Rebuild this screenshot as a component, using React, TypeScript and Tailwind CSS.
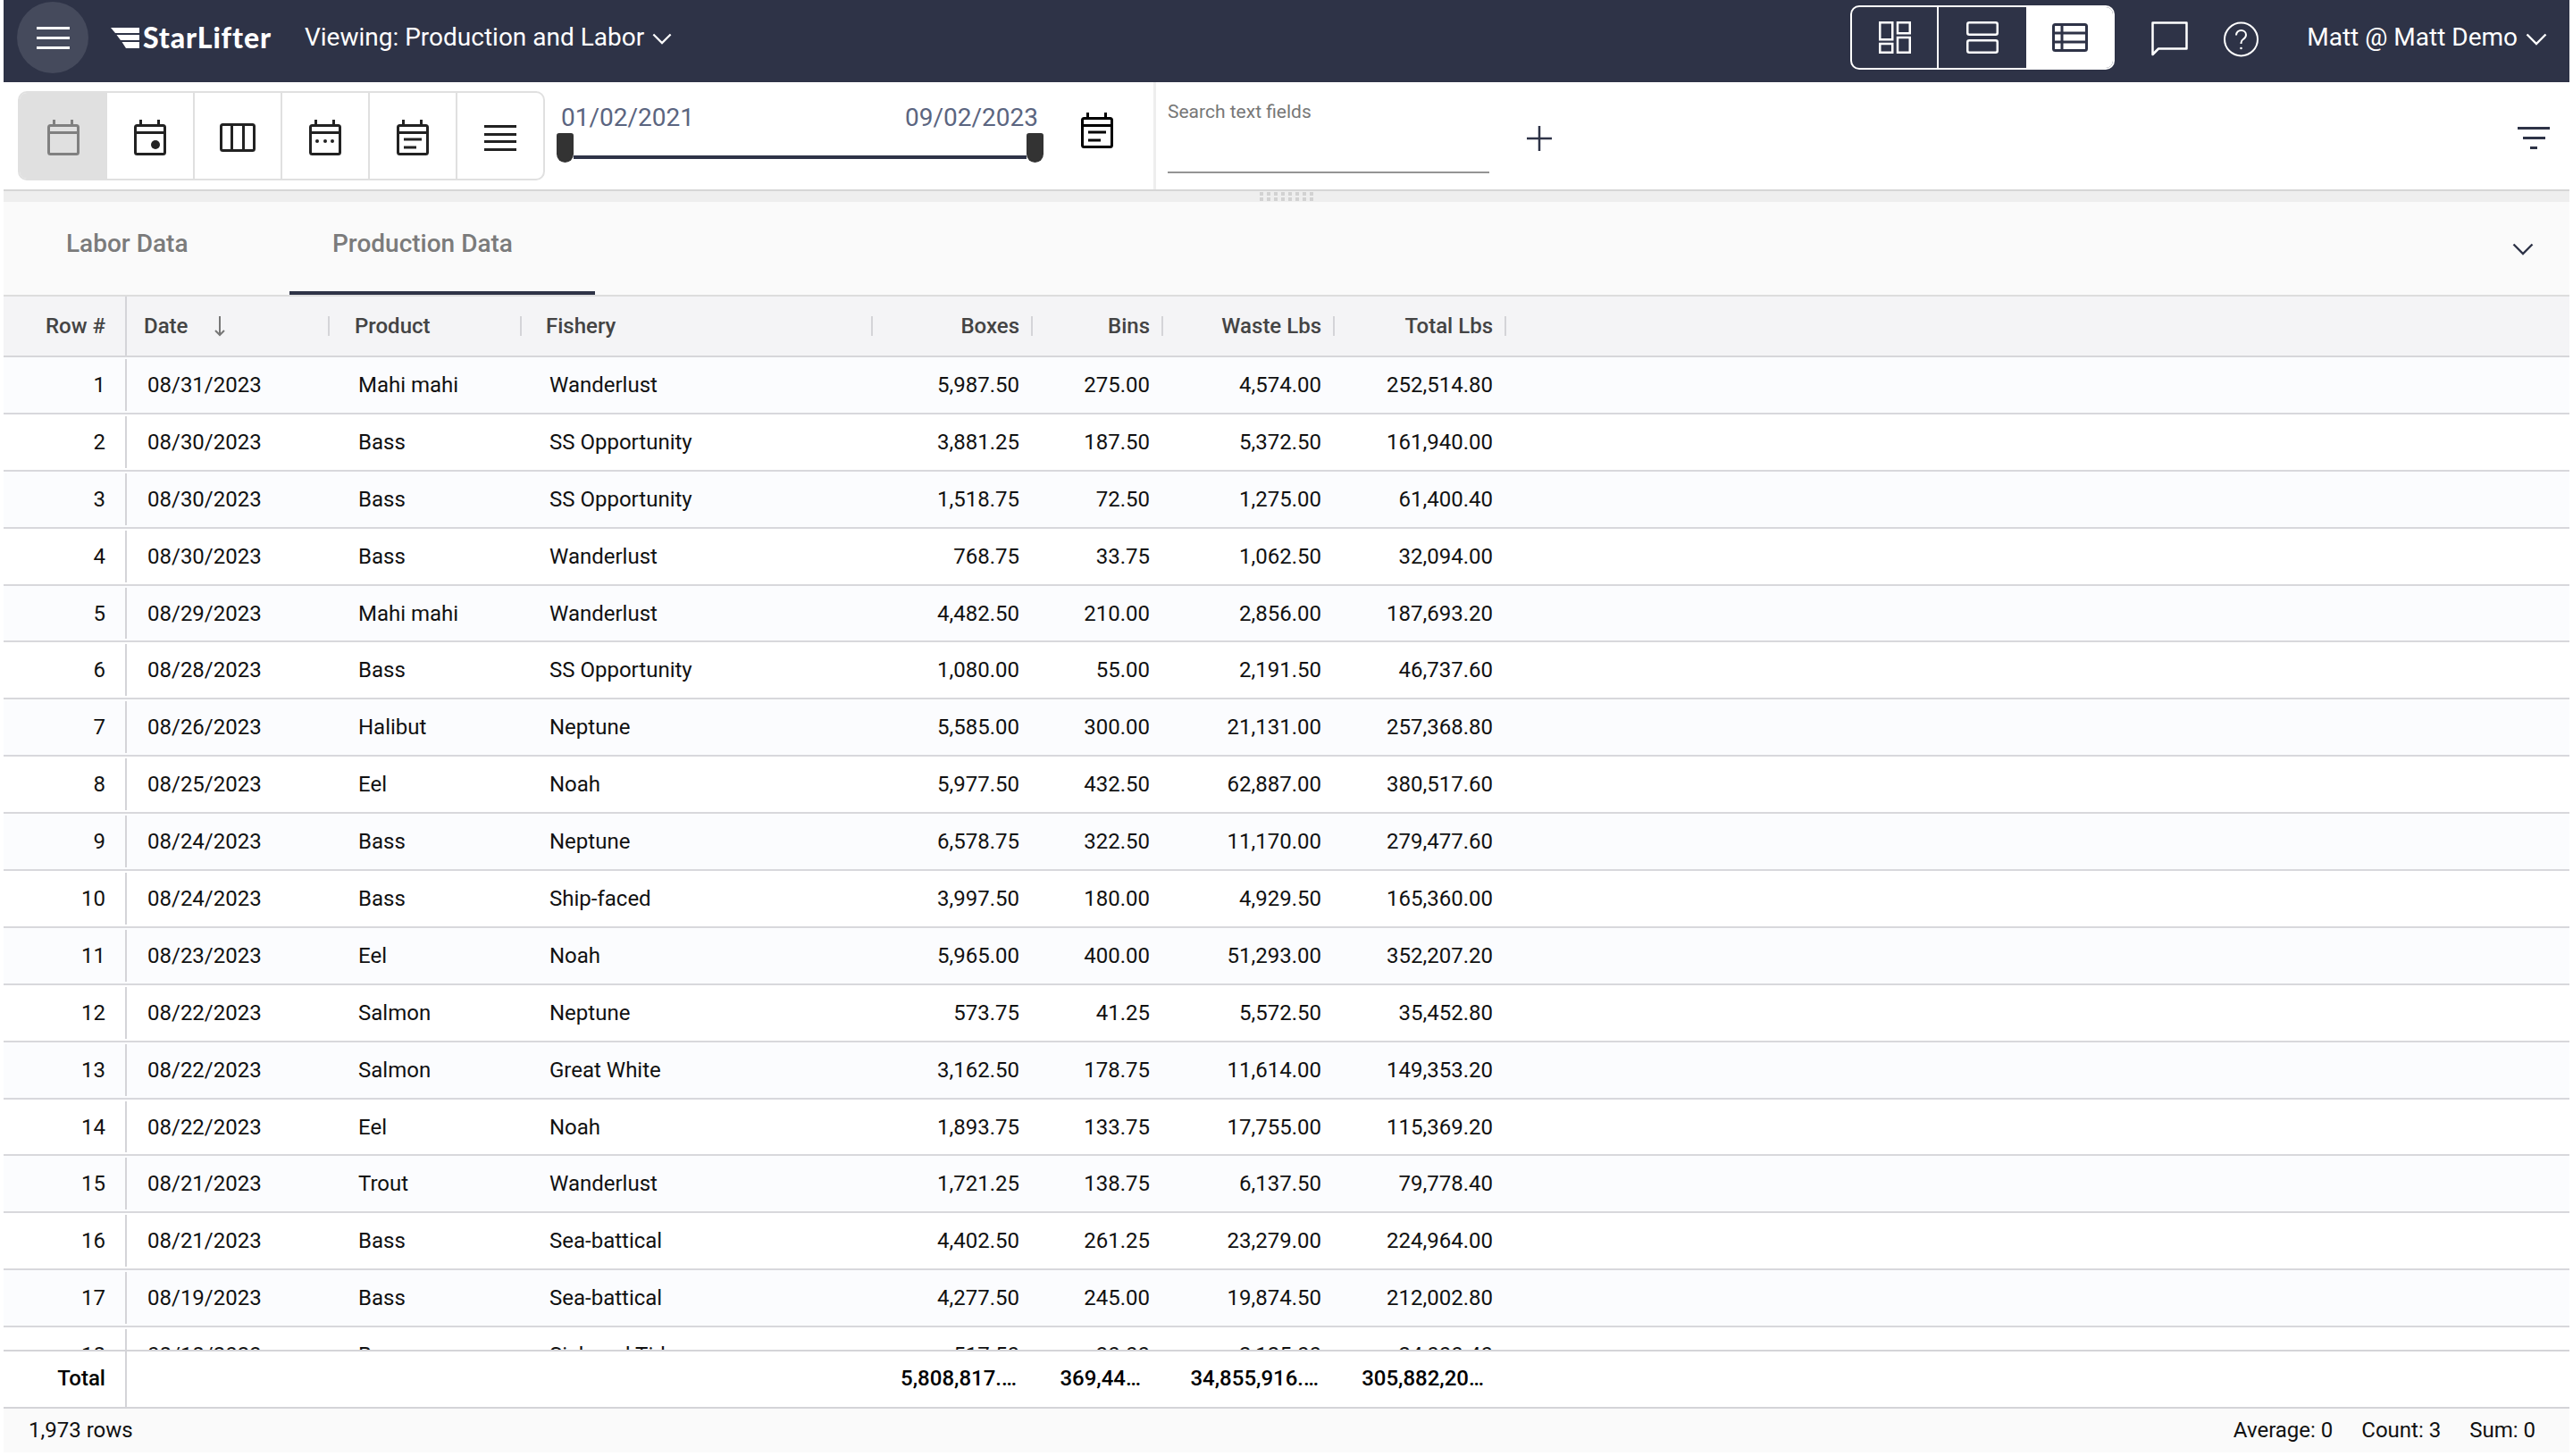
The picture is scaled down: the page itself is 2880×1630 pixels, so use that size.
const sans = "font-['Roboto',sans-serif]";

const rows = [
  ["1", "08/31/2023", "Mahi mahi", "Wanderlust", "5,987.50", "275.00", "4,574.00", "252,514.80"],
  ["2", "08/30/2023", "Bass", "SS Opportunity", "3,881.25", "187.50", "5,372.50", "161,940.00"],
  ["3", "08/30/2023", "Bass", "SS Opportunity", "1,518.75", "72.50", "1,275.00", "61,400.40"],
  ["4", "08/30/2023", "Bass", "Wanderlust", "768.75", "33.75", "1,062.50", "32,094.00"],
  ["5", "08/29/2023", "Mahi mahi", "Wanderlust", "4,482.50", "210.00", "2,856.00", "187,693.20"],
  ["6", "08/28/2023", "Bass", "SS Opportunity", "1,080.00", "55.00", "2,191.50", "46,737.60"],
  ["7", "08/26/2023", "Halibut", "Neptune", "5,585.00", "300.00", "21,131.00", "257,368.80"],
  ["8", "08/25/2023", "Eel", "Noah", "5,977.50", "432.50", "62,887.00", "380,517.60"],
  ["9", "08/24/2023", "Bass", "Neptune", "6,578.75", "322.50", "11,170.00", "279,477.60"],
  ["10", "08/24/2023", "Bass", "Ship-faced", "3,997.50", "180.00", "4,929.50", "165,360.00"],
  ["11", "08/23/2023", "Eel", "Noah", "5,965.00", "400.00", "51,293.00", "352,207.20"],
  ["12", "08/22/2023", "Salmon", "Neptune", "573.75", "41.25", "5,572.50", "35,452.80"],
  ["13", "08/22/2023", "Salmon", "Great White", "3,162.50", "178.75", "11,614.00", "149,353.20"],
  ["14", "08/22/2023", "Eel", "Noah", "1,893.75", "133.75", "17,755.00", "115,369.20"],
  ["15", "08/21/2023", "Trout", "Wanderlust", "1,721.25", "138.75", "6,137.50", "79,778.40"],
  ["16", "08/21/2023", "Bass", "Sea-battical", "4,402.50", "261.25", "23,279.00", "224,964.00"],
  ["17", "08/19/2023", "Bass", "Sea-battical", "4,277.50", "245.00", "19,874.50", "212,002.80"],
  ["18", "08/18/2023", "Bass", "Sick and Tide", "517.50", "30.00", "2,125.00", "24,000.40"],
];

function CalendarBase({ className, children }: { className?: string; children?: React.ReactNode }) {
  return (
    <svg viewBox="0 0 36 40" className={"w-[36px] h-[40px] " + (className || "")} fill="none" stroke="currentColor" strokeWidth="3">
      <rect x="1.5" y="6.5" width="33" height="32" rx="2" />
      <path d="M7.5 0v6M27.5 0v6M1.5 14.5h33" />
      {children}
    </svg>
  );
}

function NotesCalendar({ className }: { className?: string }) {
  return (
    <CalendarBase className={className}>
      <path d="M8 22h20M8 31h14" />
    </CalendarBase>
  );
}

function Chevron({ className }: { className?: string }) {
  return (
    <svg viewBox="0 0 24 14" className={className} fill="none" stroke="currentColor" strokeWidth="2.4">
      <path d="M1.5 1.5 12 12 22.5 1.5" />
    </svg>
  );
}

function Logo() {
  return (
    <div className="flex items-center gap-[4px]">
      <svg viewBox="0 0 32 23" className="w-[32px] h-[23px]" fill="white">
        <path d="M0 0h32v6H5zM6.5 8H32v6H11zM12.5 16H32v7H17z" />
      </svg>
      <span className="font-['Lato',sans-serif] font-black text-[32px] leading-none tracking-[0.9px] text-white">StarLifter</span>
    </div>
  );
}

function TopBar() {
  return (
    <div className={"h-[92px] bg-[#2e3347] text-white flex items-center pl-[15px] pr-[25px] pb-[8px] " + sans}>
      <div className="w-[80px] h-[80px] rounded-full bg-[#454a5c] flex flex-col items-center justify-center gap-[8px]">
        <div className="w-[37px] h-[3px] bg-white" />
        <div className="w-[37px] h-[3px] bg-white" />
        <div className="w-[37px] h-[3px] bg-white" />
      </div>
      <div className="ml-[25px]">
        <Logo />
      </div>
      <div className="ml-[37px] mb-[1px] text-[28px] flex items-center gap-[9px]">
        <span>Viewing: Production and Labor</span>
        <Chevron className="w-[22px] h-[13px] mt-[4px]" />
      </div>
      <div className="ml-auto w-[296px] h-[72px] rounded-[10px] border-2 border-white flex overflow-hidden">
        <div className="w-[97px] border-r-2 border-white flex items-center justify-center">
          <svg viewBox="0 0 36 36" className="w-[36px] h-[36px]" fill="none" stroke="currentColor" strokeWidth="2.5">
            <rect x="1.25" y="1.25" width="14" height="19" />
            <rect x="21" y="1.25" width="13.75" height="12" />
            <rect x="1.25" y="25" width="14" height="9.75" />
            <rect x="21" y="18" width="13.75" height="16.75" />
          </svg>
        </div>
        <div className="w-[98px] flex items-center justify-center">
          <svg viewBox="0 0 36 36" className="w-[36px] h-[36px]" fill="none" stroke="currentColor" strokeWidth="2.5">
            <rect x="1.25" y="1.25" width="33.5" height="13.5" rx="2" />
            <rect x="1.25" y="21.25" width="33.5" height="13.5" rx="2" />
          </svg>
        </div>
        <div className="flex-1 bg-white flex items-center justify-center text-[#2e3347]">
          <svg viewBox="0 0 40 32" className="w-[40px] h-[32px]" fill="none" stroke="currentColor" strokeWidth="3">
            <rect x="1.5" y="1.5" width="37" height="29" rx="2" />
            <path d="M1.5 11h37M1.5 21h37M11 1.5v29" />
          </svg>
        </div>
      </div>
      <svg viewBox="0 0 41 40" className="ml-[41px] mt-[3px] w-[41px] h-[40px]" fill="none" stroke="currentColor" strokeWidth="2.5">
        <path d="M1.5 37V1.5h38v29H8z" strokeLinejoin="round" />
      </svg>
      <svg viewBox="0 0 40 40" className="ml-[39px] mt-[3px] w-[41px] h-[40px]" fill="none" stroke="currentColor" strokeWidth="2">
        <circle cx="20" cy="20" r="18.5" />
        <path d="M14.5 15.5c0-3.2 2.4-5.5 5.6-5.5 3.1 0 5.4 2.1 5.4 5 0 2.3-1.2 3.6-3 4.8-1.7 1.2-2.5 2.2-2.5 4.2v1" />
        <circle cx="20" cy="30" r="1.3" fill="currentColor" stroke="none" />
      </svg>
      <div className="ml-[53px] mb-[1px] text-[28px] flex items-center gap-[9px]">
        <span>Matt @ Matt Demo</span>
        <Chevron className="w-[24px] h-[14px] mt-[4px]" />
      </div>
    </div>
  );
}

function Toolbar() {
  return (
    <div className={"h-[122px] bg-white border-b-2 border-[#d6d6d6] flex " + sans}>
      <div className="w-[1287px] flex items-start pt-[10px] pl-[16px]">
        <div className="w-[590px] h-[100px] rounded-[10px] border-2 border-[#e0e0e0] flex overflow-hidden text-[#222222]">
          <div className="w-[98px] pt-[4px] bg-[#e0e0e0] flex items-center justify-center text-[#808080]">
            <CalendarBase />
          </div>
          <div className="w-[98px] pt-[4px] border-r-2 border-[#e0e0e0] flex items-center justify-center">
            <CalendarBase>
              <circle cx="24" cy="28" r="5" fill="currentColor" stroke="none" />
            </CalendarBase>
          </div>
          <div className="w-[98px] pt-[4px] border-r-2 border-[#e0e0e0] flex items-center justify-center">
            <svg viewBox="0 0 40 32" className="w-[40px] h-[32px]" fill="none" stroke="currentColor" strokeWidth="3">
              <rect x="1.5" y="1.5" width="37" height="29" rx="2" />
              <path d="M13.5 1.5v29M26.5 1.5v29" />
            </svg>
          </div>
          <div className="w-[98px] pt-[4px] border-r-2 border-[#e0e0e0] flex items-center justify-center">
            <CalendarBase>
              <g fill="currentColor" stroke="none">
                <circle cx="9" cy="24" r="2" />
                <circle cx="18" cy="24" r="2" />
                <circle cx="26" cy="24" r="2" />
              </g>
            </CalendarBase>
          </div>
          <div className="w-[98px] pt-[4px] border-r-2 border-[#e0e0e0] flex items-center justify-center">
            <NotesCalendar />
          </div>
          <div className="flex-1 pt-[5px] flex flex-col items-center justify-center gap-[5.5px]">
            <div className="w-[36px] h-[3px] bg-[#222222]" />
            <div className="w-[36px] h-[3px] bg-[#222222]" />
            <div className="w-[36px] h-[3px] bg-[#222222]" />
            <div className="w-[36px] h-[3px] bg-[#222222]" />
          </div>
        </div>
        <div className="ml-[13px] w-[545px] mt-[13px]">
          <div className="flex justify-between pl-[5px] pr-[6px] text-[28px] leading-[33px] text-[#5b6580]">
            <span>01/02/2021</span>
            <span>09/02/2023</span>
          </div>
          <div className="flex items-center h-[33px] mt-[1px]">
            <div className="w-[19px] h-[33px] rounded-b-[10px] rounded-t-[3px] bg-[#333333]" />
            <div className="flex-1 h-[4px] bg-[#2e3347] mt-[21px]" />
            <div className="w-[19px] h-[33px] rounded-b-[10px] rounded-t-[3px] bg-[#333333]" />
          </div>
        </div>
        <NotesCalendar className="ml-[42px] mt-[24px] text-black" />
      </div>
      <div className="w-[3px] bg-[#eeeeee]" />
      <div className="flex-1 flex pl-[13px] pr-[22px]">
        <div className="w-[360px]">
          <div className="text-[21px] leading-[24px] text-[#777777] pt-[21px] h-[102px] border-b-2 border-[#949494]">Search text fields</div>
        </div>
        <svg viewBox="0 0 30 30" className="ml-[41px] mt-[48px] w-[30px] h-[30px] text-[#2e3347]" fill="none" stroke="currentColor" strokeWidth="2.5">
          <path d="M15 1v28M1 15h28" />
        </svg>
        <div className="ml-auto mt-[50px] flex flex-col items-center gap-[8px]">
          <div className="w-[36px] h-[3px] bg-[#2e3347]" />
          <div className="w-[25px] h-[3px] bg-[#2e3347]" />
          <div className="w-[8px] h-[3px] bg-[#2e3347]" />
        </div>
      </div>
    </div>
  );
}

function ResizeBar() {
  return (
    <div className="h-[12px] bg-[#eeeeee] flex justify-center">
      <div className="grid grid-cols-[repeat(8,4px)] gap-x-[4px] gap-y-[1px] pt-[1px]">
        {Array.from({ length: 16 }).map((_, i) => (
          <div key={i} className="w-[4px] h-[4px] bg-[#d2d2d2]" />
        ))}
      </div>
    </div>
  );
}

function Tabs() {
  return (
    <div className={"h-[106px] bg-[#fafafa] border-b-2 border-[#dddddd] flex text-[28px] font-medium text-[#7b7b7b] " + sans}>
      <div className="w-[320px] pl-[70px] pt-[30px] leading-[33px]">Labor Data</div>
      <div className="w-[342px] pl-[48px] pt-[30px] leading-[33px] border-b-4 border-[#2e3347]">Production Data</div>
      <div className="ml-auto pr-[40px] pt-[46px] text-[#2e3347]">
        <Chevron className="w-[24px] h-[14px]" />
      </div>
    </div>
  );
}

function HeaderDivider() {
  return <div className="w-[2px] h-[22px] bg-[#d4d4d8] shrink-0" />;
}

function HeaderRow() {
  return (
    <div className="h-[68px] bg-[#f4f4f6] border-b-2 border-[#d6d6da] flex items-stretch text-[24px] font-medium text-[#444444]">
      <div className="w-[138px] border-r-2 border-[#d4d4d8] flex items-center justify-end pr-[22px]">Row #</div>
      <div className="w-[227px] flex items-center pl-[19px]">
        <span>Date</span>
        <svg viewBox="0 0 14 24" className="ml-[29px] w-[14px] h-[24px] text-[#777777]" fill="none" stroke="currentColor" strokeWidth="2">
          <path d="M7 1v21M2 17l5 5 5-5" />
        </svg>
        <div className="ml-auto"><HeaderDivider /></div>
      </div>
      <div className="w-[215px] flex items-center justify-between pl-[28px]">
        <span>Product</span>
        <HeaderDivider />
      </div>
      <div className="w-[393px] flex items-center justify-between pl-[27px]">
        <span>Fishery</span>
        <HeaderDivider />
      </div>
      <div className="w-[179px] flex items-center justify-end gap-[13px]">
        <span>Boxes</span>
        <HeaderDivider />
      </div>
      <div className="w-[146px] flex items-center justify-end gap-[13px]">
        <span>Bins</span>
        <HeaderDivider />
      </div>
      <div className="w-[192px] flex items-center justify-end gap-[13px]">
        <span>Waste Lbs</span>
        <HeaderDivider />
      </div>
      <div className="w-[192px] flex items-center justify-end gap-[13px]">
        <span>Total Lbs</span>
        <HeaderDivider />
      </div>
    </div>
  );
}

function DataRow({ row, odd }: { row: string[]; odd: boolean }) {
  return (
    <div className={"h-[63.9px] shrink-0 border-b-2 border-[#d8d8dc] flex text-[24px] text-[#111111] " + (odd ? "bg-[#fbfcfe]" : "bg-white")}>
      <div className="w-[138px] my-[2px] border-r-2 border-[#d4d4d8] flex items-center justify-end pr-[22px]">{row[0]}</div>
      <div className="w-[227px] flex items-center pl-[23px]">{row[1]}</div>
      <div className="w-[215px] flex items-center pl-[32px]">{row[2]}</div>
      <div className="w-[393px] flex items-center pl-[31px]">{row[3]}</div>
      <div className="w-[179px] flex items-center justify-end pr-[15px]">{row[4]}</div>
      <div className="w-[146px] flex items-center justify-end pr-[15px]">{row[5]}</div>
      <div className="w-[192px] flex items-center justify-end pr-[15px]">{row[6]}</div>
      <div className="w-[192px] flex items-center justify-end pr-[15px]">{row[7]}</div>
    </div>
  );
}

function TotalRow() {
  return (
    <div className="h-[66px] bg-white border-y-2 border-[#d4d4d8] flex text-[24px] font-medium text-black">
      <div className="w-[138px] border-r-2 border-[#d4d4d8] flex items-center justify-end pr-[22px] pb-[2px]">Total</div>
      <div className="w-[835px]" />
      <div className="w-[179px] flex items-center justify-end pr-[18px] pb-[2px]">5,808,817.…</div>
      <div className="w-[146px] flex items-center justify-end pr-[25px] pb-[2px]">369,44…</div>
      <div className="w-[192px] flex items-center justify-end pr-[18px] pb-[2px]">34,855,916.…</div>
      <div className="w-[192px] flex items-center justify-end pr-[25px] pb-[2px]">305,882,20…</div>
    </div>
  );
}

function Grid() {
  return (
    <div className={"flex flex-col " + sans}>
      <HeaderRow />
      <div className="h-[1111px] overflow-hidden flex flex-col">
        {rows.map((row, i) => (
          <DataRow key={row[0]} row={row} odd={i % 2 === 0} />
        ))}
      </div>
      <TotalRow />
      <div className="h-[49px] bg-[#fafafa] flex items-center pl-[28px] pr-[38px] pb-[2px] text-[24px] text-[#111111]">
        <span>1,973 rows</span>
        <div className="ml-auto flex gap-[32px]">
          <span>Average: 0</span>
          <span>Count: 3</span>
          <span>Sum: 0</span>
        </div>
      </div>
    </div>
  );
}

export default function App() {
  return (
    <div className="w-[2880px] h-[1630px] bg-white px-[4px] overflow-hidden">
      <TopBar />
      <Toolbar />
      <ResizeBar />
      <Tabs />
      <Grid />
    </div>
  );
}
